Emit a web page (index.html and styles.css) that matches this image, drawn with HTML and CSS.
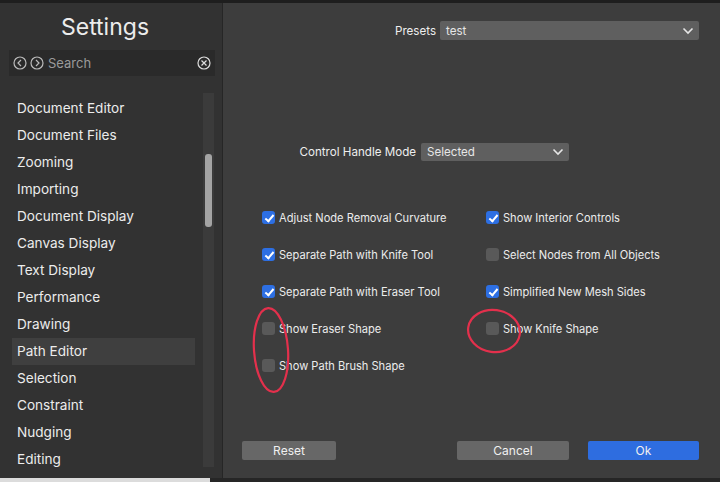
FILE: index.html
```html
<!DOCTYPE html>
<html lang="en">
<head>
    <meta charset="UTF-8">
    <meta name="viewport" content="width=device-width, initial-scale=1.0">
    <title>Settings</title>
    <link rel="stylesheet" href="styles.css">
</head>
<body>
    <div class="topbar"></div>
    <div class="window">
        <div class="sidebar">
            <h1 class="title">Settings</h1>
            <div class="search">
                <svg class="navicon" width="14" height="14" viewBox="0 0 14 14"><circle cx="7" cy="7" r="6" fill="none" stroke="#bbb" stroke-width="1.2"/><path d="M8 4 L5 7 L8 10" fill="none" stroke="#bbb" stroke-width="1.2"/></svg>
                <svg class="navicon" width="14" height="14" viewBox="0 0 14 14"><circle cx="7" cy="7" r="6" fill="none" stroke="#bbb" stroke-width="1.2"/><path d="M6 4 L9 7 L6 10" fill="none" stroke="#bbb" stroke-width="1.2"/></svg>
                <span class="searchtext">Search</span>
                <svg class="clearicon" width="14" height="14" viewBox="0 0 14 14"><circle cx="7" cy="7" r="6" fill="none" stroke="#ddd" stroke-width="1.2"/><path d="M4.5 4.5 L9.5 9.5 M9.5 4.5 L4.5 9.5" stroke="#ddd" stroke-width="1.2"/></svg>
            </div>
            <div class="listwrap">
                <ul class="list">
                    <li>Document Editor</li>
                    <li>Document Files</li>
                    <li>Zooming</li>
                    <li>Importing</li>
                    <li>Document Display</li>
                    <li>Canvas Display</li>
                    <li>Text Display</li>
                    <li>Performance</li>
                    <li>Drawing</li>
                    <li class="active">Path Editor</li>
                    <li>Selection</li>
                    <li>Constraint</li>
                    <li>Nudging</li>
                    <li>Editing</li>
                </ul>
                <div class="scrolltrack"><div class="scrollthumb"></div></div>
            </div>
        </div>
        <div class="panel">
            <div class="row presets">
                <span class="label">Presets</span>
                <div class="select wide"><span>test</span>
                    <svg width="12" height="8" viewBox="0 0 12 8"><path d="M1.5 1.5 L6 6 L10.5 1.5" fill="none" stroke="#e6e6e6" stroke-width="1.6"/></svg>
                </div>
            </div>
            <div class="row handle">
                <span class="label fixed">Control Handle Mode</span>
                <div class="select narrow"><span>Selected</span>
                    <svg width="12" height="8" viewBox="0 0 12 8"><path d="M1.5 1.5 L6 6 L10.5 1.5" fill="none" stroke="#e6e6e6" stroke-width="1.6"/></svg>
                </div>
            </div>
            <div class="checks">
                <div class="check"><span class="box on"></span>Adjust Node Removal Curvature</div>
                <div class="check"><span class="box on"></span>Show Interior Controls</div>
                <div class="check"><span class="box on"></span>Separate Path with Knife Tool</div>
                <div class="check"><span class="box"></span>Select Nodes from All Objects</div>
                <div class="check"><span class="box on"></span>Separate Path with Eraser Tool</div>
                <div class="check"><span class="box on"></span>Simplified New Mesh Sides</div>
                <div class="check"><span class="box"></span>Show Eraser Shape</div>
                <div class="check"><span class="box"></span>Show Knife Shape</div>
                <div class="check"><span class="box"></span>Show Path Brush Shape</div>
            </div>
            <div class="buttons">
                <button class="btn">Reset</button>
                <span class="grow"></span>
                <button class="btn">Cancel</button>
                <button class="btn primary">Ok</button>
            </div>
        </div>
    </div>
    <div class="bottombar"><div class="light"></div></div>
    <svg class="marks" width="720" height="482" viewBox="0 0 720 482">
        <ellipse cx="271" cy="350" rx="17" ry="42" transform="rotate(-4 271 350)" fill="none" stroke="#e3304c" stroke-width="2.2"/>
        <ellipse cx="494" cy="331" rx="26" ry="21" transform="rotate(8 494 331)" fill="none" stroke="#e3304c" stroke-width="2.2"/>
    </svg>
</body>
</html>
```

FILE: styles.css
```css
*{
    margin:0;
    padding:0;
    box-sizing:border-box;
}
body{
    width:720px;
    height:482px;
    overflow:hidden;
    background:#2a2a2a;
    font-family:Inter,"Liberation Sans",sans-serif;
    color:#e6e6e6;
    position:relative;
}
.topbar{
    height:3px;
    background:#1e1e1e;
}
.window{
    display:flex;
    height:475px;
}
.sidebar{
    width:223px;
    background:#323232;
    border-right:1px solid #262626;
    display:flex;
    flex-direction:column;
}
.title{
    font-weight:400;
    font-size:23px;
    text-align:center;
    height:47px;
    line-height:48px;
    color:#ececec;
    padding-right:12px;
}
.search{
    margin:0 7px 0 9px;
    height:26px;
    background:#2a2a2a;
    display:flex;
    align-items:center;
    padding:0 4px;
    gap:3px;
}
.searchtext{
    color:#9a9a9a;
    font-size:13px;
    flex:1;
    margin-left:1px;
}
.listwrap{
    display:flex;
    margin-top:17px;
}
.list{
    list-style:none;
    width:203px;
    padding-left:12px;
    padding-right:8px;
    padding-top:2px;
}
.list li{
    height:27px;
    line-height:27px;
    font-size:13.6px;
    padding-left:5px;
    color:#ececec;
}
.list li.active{
    background:#3f3f3f;
}
.scrolltrack{
    width:11px;
    height:374px;
    background:#3b3b3b;
    padding:61px 2px 0;
}
.scrollthumb{
    height:73px;
    background:#a4a4a4;
    border-radius:3px;
}
.panel{
    flex:1;
    background:#3d3d3d;
    padding:18px 21px 0 19px;
    display:flex;
    flex-direction:column;
}
.row{
    display:flex;
    align-items:center;
    font-size:11.6px;
}
.presets{
    justify-content:flex-end;
    gap:4px;
}
.label{
    color:#eeeeee;
}
.label.fixed{
    width:174px;
    text-align:right;
}
.handle{
    margin-top:103px;
    gap:5px;
}
.select{
    height:19px;
    background:#5f5f5f;
    border-radius:2px;
    display:flex;
    align-items:center;
    justify-content:space-between;
    padding:0 5px 0 6px;
    font-size:11.6px;
}
.select.wide{
    width:259px;
}
.select.narrow{
    width:148px;
    height:18px;
}
.checks{
    margin-top:38px;
    display:grid;
    grid-template-columns:224px 1fr;
    padding-left:20px;
}
.check{
    height:37px;
    display:flex;
    align-items:center;
    font-size:11.1px;
    color:#ececec;
}
.box{
    width:13px;
    height:13px;
    border-radius:3px;
    background:#595959;
    margin-right:4px;
    position:relative;
}
.box.on{
    background:#2d6fe3;
}
.box.on::after{
    content:"";
    position:absolute;
    left:4.5px;
    top:1.5px;
    width:3px;
    height:7px;
    border:solid #fff;
    border-width:0 2px 2px 0;
    transform:rotate(40deg);
}
.buttons{
    margin-top:57px;
    display:flex;
    gap:19px;
}
.grow{
    flex:1;
}
.btn{
    height:19px;
    width:112px;
    background:#676767;
    border:none;
    border-radius:2px;
    color:#f0f0f0;
    font-family:Inter,"Liberation Sans",sans-serif;
    font-size:12px;
}
.btn:first-child{
    width:94px;
}
.btn.primary{
    background:#2e6de0;
    width:111px;
}
.bottombar{
    height:4px;
    background:#262626;
}
.bottombar .light{
    width:210px;
    height:4px;
    background:#dcdcdc;
}
.marks{
    position:absolute;
    left:0;
    top:0;
    pointer-events:none;
}
```
